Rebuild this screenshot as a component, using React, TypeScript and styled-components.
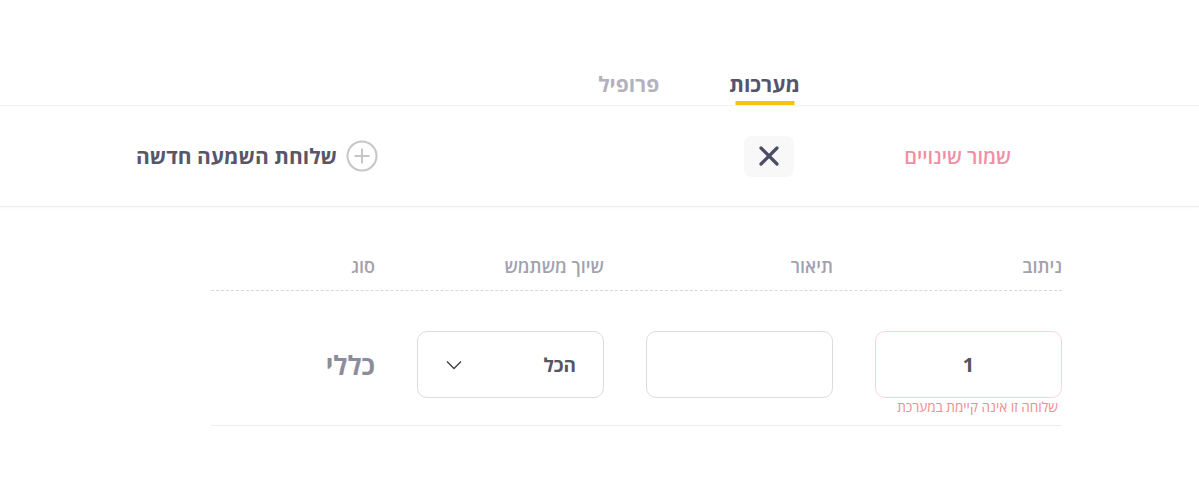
import styled, { createGlobalStyle } from "styled-components";

const GlobalStyle = createGlobalStyle`
  html, body {
    margin: 0;
    padding: 0;
    background: #ffffff;
    font-family: "Open Sans", "Noto Sans", "Liberation Sans", sans-serif;
  }
  * { box-sizing: border-box; }
`;

const App = () => {
  return (
    <Page dir="rtl">
      <GlobalStyle />
      <Tabs>
        <Tab $active>מערכות</Tab>
        <Tab>פרופיל</Tab>
      </Tabs>
      <Toolbar>
        <SaveButton>שמור שינויים</SaveButton>
        <CloseButton>
          <svg width="22" height="22" viewBox="0 0 22 22">
            <path
              d="M3 3 L19 19 M19 3 L3 19"
              stroke="#4b4d66"
              strokeWidth="3.2"
              strokeLinecap="round"
            />
          </svg>
        </CloseButton>
        <AddButton>
          <svg width="32" height="32" viewBox="0 0 32 32">
            <circle cx="16" cy="16" r="14.5" fill="none" stroke="#c6c6c9" strokeWidth="2" />
            <path d="M16 8.5 V23.5 M8.5 16 H23.5" stroke="#c6c6c9" strokeWidth="2" />
          </svg>
          שלוחת השמעה חדשה
        </AddButton>
      </Toolbar>
      <Table>
        <HeadRow>
          <HeadCell>ניתוב</HeadCell>
          <HeadCell>תיאור</HeadCell>
          <HeadCell>שיוך משתמש</HeadCell>
          <HeadCell>סוג</HeadCell>
        </HeadRow>
        <Row>
          <Field>
            <Input $error>1</Input>
            <ErrorText>שלוחה זו אינה קיימת במערכת</ErrorText>
          </Field>
          <Field>
            <Input />
          </Field>
          <Field>
            <Select>
              <span>הכל</span>
              <svg width="16" height="10" viewBox="0 0 16 10">
                <path d="M1 1.5 L8 8.5 L15 1.5" fill="none" stroke="#3c3c44" strokeWidth="1.3" />
              </svg>
            </Select>
          </Field>
          <TypeCell>כללי</TypeCell>
        </Row>
      </Table>
    </Page>
  );
};

export default App;

const Page = styled.div`
  width: 1199px;
  min-height: 477px;
  background: #ffffff;
`;

const Tabs = styled.div`
  display: flex;
  gap: 70px;
  padding-top: 66px;
  padding-right: 399px;
  height: 106px;
  border-bottom: 1px solid #f2f2f4;
`;

const Tab = styled.div<{ $active?: boolean }>`
  position: relative;
  height: 39px;
  font-size: 21px;
  font-weight: 700;
  line-height: 36px;
  color: ${({ $active }) => ($active ? "#54546a" : "#b2b1bd")};

  &::after {
    content: "";
    display: ${({ $active }) => ($active ? "block" : "none")};
    position: absolute;
    bottom: 0;
    left: 50%;
    transform: translateX(-50%);
    width: 59px;
    height: 4px;
    background: #fcc10c;
  }
`;

const Toolbar = styled.div`
  display: flex;
  align-items: center;
  height: 101px;
  padding: 0 188px 0 136px;
  border-bottom: 1px solid #ececee;
  box-shadow: 0 1px 2px rgba(0, 0, 0, 0.03);
`;

const SaveButton = styled.div`
  font-size: 20px;
  font-weight: 600;
  color: #f18ea4;
  margin-left: 110px;
  cursor: pointer;
`;

const CloseButton = styled.div`
  width: 50px;
  height: 41px;
  border-radius: 8px;
  background: #f8f8f9;
  display: flex;
  align-items: center;
  justify-content: center;
  cursor: pointer;
`;

const AddButton = styled.div`
  margin-right: auto;
  display: flex;
  align-items: center;
  gap: 9px;
  font-size: 21px;
  font-weight: 700;
  color: #57576a;
  cursor: pointer;
`;

const Table = styled.div`
  width: 851px;
  margin-right: 137px;
  padding-top: 44px;
`;

const Grid = styled.div`
  display: grid;
  grid-template-columns: 187px 187px 187px 1fr;
  column-gap: 42px;
`;

const HeadRow = styled(Grid)`
  height: 40px;
  border-bottom: 1px dashed #d8d8dc;
`;

const HeadCell = styled.div`
  font-size: 18px;
  font-weight: 600;
  color: #a2a1af;
  line-height: 30px;
`;

const Row = styled(Grid)`
  padding-top: 40px;
  height: 135px;
  border-bottom: 1px solid #eeeef0;
`;

const Field = styled.div`
  display: flex;
  flex-direction: column;
`;

const Input = styled.div<{ $error?: boolean }>`
  height: 67px;
  border-radius: 10px;
  border: 1px solid ${({ $error }) => ($error ? "#ffd5d8" : "#dcdcdf")};
  display: flex;
  align-items: center;
  justify-content: center;
  font-size: 20px;
  font-weight: 700;
  color: #55555d;
`;

const ErrorText = styled.div`
  margin-top: -1px;
  padding-right: 4px;
  font-size: 13.6px;
  color: #f58a8f;
  white-space: nowrap;
`;

const Select = styled.div`
  height: 67px;
  border-radius: 10px;
  border: 1px solid #dcdcdf;
  display: flex;
  align-items: center;
  justify-content: space-between;
  padding: 0 27px 0 28px;
  font-size: 19px;
  font-weight: 700;
  color: #55555f;
`;

const TypeCell = styled.div`
  height: 67px;
  display: flex;
  align-items: center;
  font-size: 26px;
  font-weight: 700;
  color: #8d8c9b;
`;
